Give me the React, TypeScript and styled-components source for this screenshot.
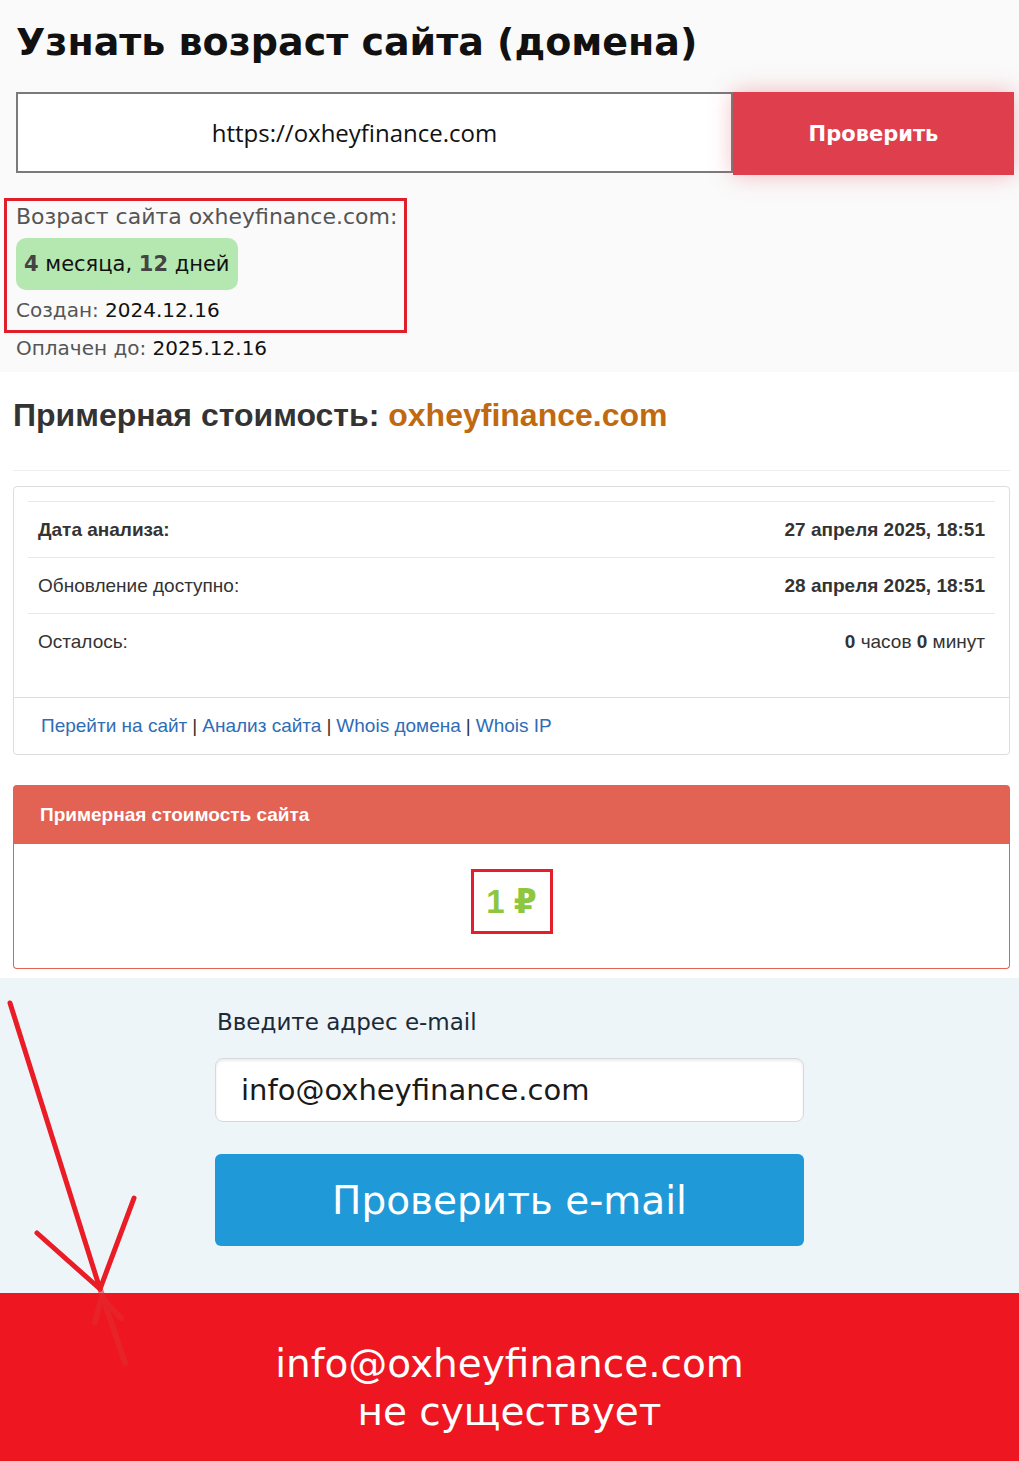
import React from "react";
import styled, { createGlobalStyle } from "styled-components";

const GlobalStyle = createGlobalStyle`
  html, body {
    margin: 0;
    padding: 0;
  }
  body {
    background: #ffffff;
    font-family: "DejaVu Sans", sans-serif;
  }
`;

const Page = styled.div`
  position: relative;
  width: 1019px;
  overflow: hidden;
`;

/* ---------- domain age block ---------- */

const AgeSection = styled.section`
  background: #fafafa;
  padding: 18px 5px 9px 16px;
`;

const Title = styled.h1`
  margin: 0;
  font: 700 38px/48px "DejaVu Sans", sans-serif;
  color: #111111;
`;

const CheckRow = styled.div`
  display: flex;
  align-items: flex-start;
  margin-top: 26px;
`;

const UrlInput = styled.div`
  box-sizing: border-box;
  width: 717px;
  height: 81px;
  border: 2px solid #7a7a7a;
  background: #ffffff;
  display: flex;
  align-items: center;
  justify-content: center;
  padding-right: 40px;
  font: 400 24px "Open Sans", sans-serif;
  color: #111111;
`;

const CheckButton = styled.button`
  width: 281px;
  height: 83px;
  border: none;
  background: #df3e4d;
  color: #ffffff;
  font: 700 21px "DejaVu Sans", sans-serif;
  box-shadow: 0 0 22px rgba(223, 62, 77, 0.35);
  cursor: pointer;
`;

const ResultBox = styled.div`
  width: fit-content;
  margin: 23px 0 0 -12px;
  border: 3px solid #e01f2b;
  padding: 0 7px 4px 9px;
`;

const InfoLine = styled.div<{ $large?: boolean }>`
  font: 400 ${(p) => (p.$large ? 22 : 20)}px/32px "DejaVu Sans", sans-serif;
  color: #555555;
  b {
    font-weight: 400;
    color: #111111;
  }
`;

const PaidLine = styled(InfoLine)`
  line-height: 30px;
`;

const AgeBadge = styled.div`
  display: inline-flex;
  align-items: center;
  height: 52px;
  margin: 5px 0 4px;
  padding: 0 8px;
  border-radius: 10px;
  background: #b4e8b0;
  font: 400 21px "DejaVu Sans", sans-serif;
  color: #111111;
  b {
    color: #444444;
    font-weight: 700;
  }
`;

/* ---------- price block ---------- */

const PriceSection = styled.section`
  background: #ffffff;
  padding: 23px 9px 9px 13px;
  font-family: "Liberation Sans", Arial, sans-serif;
`;

const PriceHeading = styled.h2`
  margin: 0;
  font: 700 32px/40px "Liberation Sans", Arial, sans-serif;
  color: #333333;
  span {
    color: #bf6a10;
  }
`;

const Divider = styled.hr`
  margin: 35px 0 0;
  border: none;
  border-top: 1px solid #eeeeee;
`;

const InfoPanel = styled.div`
  margin-top: 15px;
  border: 1px solid #dddddd;
  border-radius: 4px;
`;

const PanelBody = styled.div`
  padding: 14px 14px 28px;
`;

const InfoRow = styled.div`
  display: flex;
  justify-content: space-between;
  align-items: center;
  height: 55px;
  padding: 0 10px;
  border-top: 1px solid #e8e8e8;
  font-size: 19px;
  color: #333333;
`;

const RowLabel = styled.span<{ $bold?: boolean }>`
  font-weight: ${(p) => (p.$bold ? 700 : 400)};
`;

const RowValue = styled.span`
  b {
    font-weight: 700;
  }
`;

const PanelFooter = styled.div`
  display: flex;
  align-items: center;
  height: 56px;
  padding-left: 27px;
  border-top: 1px solid #dddddd;
  font-size: 19px;
  color: #333333;
`;

const FooterLink = styled.a`
  color: #2f6db5;
  text-decoration: none;
`;

const Sep = styled.span`
  margin: 0 5px;
`;

const CostPanel = styled.div`
  margin-top: 30px;
`;

const CostHeader = styled.div`
  display: flex;
  align-items: center;
  height: 59px;
  padding-left: 27px;
  background: #e26253;
  border-radius: 4px 4px 0 0;
  font: 700 19px "Liberation Sans", Arial, sans-serif;
  color: #ffffff;
`;

const CostBody = styled.div`
  display: flex;
  align-items: center;
  justify-content: center;
  height: 125px;
  box-sizing: border-box;
  border: 1px solid #e26253;
  border-top: none;
  border-radius: 0 0 4px 4px;
  padding-bottom: 10px;
`;

const PriceMark = styled.div`
  box-sizing: border-box;
  width: 82px;
  height: 65px;
  border: 3px solid #e41e2b;
  display: flex;
  align-items: center;
  justify-content: center;
  font: 700 33px "Liberation Sans", "DejaVu Sans", sans-serif;
  color: #8dc63f;
`;

/* ---------- email check ---------- */

const EmailSection = styled.section`
  background: #eef5f9;
  padding: 28px 0 47px;
`;

const EmailColumn = styled.div`
  width: 589px;
  margin: 0 auto;
`;

const EmailLabel = styled.div`
  padding-left: 2px;
  font: 400 23px/32px "DejaVu Sans", sans-serif;
  color: #1b2a38;
`;

const EmailInput = styled.div`
  box-sizing: border-box;
  height: 64px;
  margin-top: 20px;
  padding-left: 25px;
  display: flex;
  align-items: center;
  background: #ffffff;
  border: 1px solid #d6d9db;
  border-radius: 8px;
  box-shadow: inset 0 2px 3px rgba(0, 0, 0, 0.08);
  font: 400 29px "DejaVu Sans", sans-serif;
  color: #1a1a1a;
`;

const EmailButton = styled.button`
  display: block;
  width: 100%;
  height: 92px;
  margin-top: 32px;
  border: none;
  border-radius: 6px;
  background: #1f99d7;
  color: #ffffff;
  font: 400 39px "DejaVu Sans", sans-serif;
  cursor: pointer;
`;

const ResultBanner = styled.section`
  background: #ee1620;
  padding: 47px 0 26px;
  text-align: center;
  color: #ffffff;
  font: 400 39px/48px "DejaVu Sans", sans-serif;
`;

/* ---------- hand drawn arrow over the page ---------- */

const ArrowLayer = styled.svg`
  position: absolute;
  left: 0;
  top: 0;
  pointer-events: none;
`;

const Arrow = () => (
  <ArrowLayer width="1019" height="1461" viewBox="0 0 1019 1461">
    <g stroke="#ea1d27" strokeWidth="5" strokeLinecap="round" fill="none">
      <path d="M10 1003 L100 1289" />
      <path d="M37 1233 L100 1289" />
      <path d="M134 1198 L100 1289" />
    </g>
    <g stroke="#e42a30" strokeWidth="6" strokeLinecap="round" fill="none" opacity="0.6">
      <path d="M101 1292 L125 1363" />
      <path d="M101 1300 L95 1322" />
      <path d="M104 1300 L121 1318" />
    </g>
  </ArrowLayer>
);

const App = () => (
  <Page>
    <GlobalStyle />

    <AgeSection>
      <Title>Узнать возраст сайта (домена)</Title>
      <CheckRow>
        <UrlInput>https://oxheyfinance.com</UrlInput>
        <CheckButton type="button">Проверить</CheckButton>
      </CheckRow>
      <ResultBox>
        <InfoLine $large>Возраст сайта oxheyfinance.com:</InfoLine>
        <AgeBadge>
          <b>4</b>&nbsp;месяца,&nbsp;<b>12</b>&nbsp;дней
        </AgeBadge>
        <InfoLine>
          Создан: <b>2024.12.16</b>
        </InfoLine>
      </ResultBox>
      <PaidLine>
        Оплачен до: <b>2025.12.16</b>
      </PaidLine>
    </AgeSection>

    <PriceSection>
      <PriceHeading>
        Примерная стоимость: <span>oxheyfinance.com</span>
      </PriceHeading>
      <Divider />
      <InfoPanel>
        <PanelBody>
          <InfoRow>
            <RowLabel $bold>Дата анализа:</RowLabel>
            <RowValue>
              <b>27 апреля 2025, 18:51</b>
            </RowValue>
          </InfoRow>
          <InfoRow>
            <RowLabel>Обновление доступно:</RowLabel>
            <RowValue>
              <b>28 апреля 2025, 18:51</b>
            </RowValue>
          </InfoRow>
          <InfoRow>
            <RowLabel>Осталось:</RowLabel>
            <RowValue>
              <b>0</b> часов <b>0</b> минут
            </RowValue>
          </InfoRow>
        </PanelBody>
        <PanelFooter>
          <FooterLink href="#">Перейти на сайт</FooterLink>
          <Sep>|</Sep>
          <FooterLink href="#">Анализ сайта</FooterLink>
          <Sep>|</Sep>
          <FooterLink href="#">Whois домена</FooterLink>
          <Sep>|</Sep>
          <FooterLink href="#">Whois IP</FooterLink>
        </PanelFooter>
      </InfoPanel>

      <CostPanel>
        <CostHeader>Примерная стоимость сайта</CostHeader>
        <CostBody>
          <PriceMark>1 ₽</PriceMark>
        </CostBody>
      </CostPanel>
    </PriceSection>

    <EmailSection>
      <EmailColumn>
        <EmailLabel>Введите адрес e-mail</EmailLabel>
        <EmailInput>info@oxheyfinance.com</EmailInput>
        <EmailButton type="button">Проверить e-mail</EmailButton>
      </EmailColumn>
    </EmailSection>

    <ResultBanner>
      info@oxheyfinance.com
      <br />
      не существует
    </ResultBanner>

    <Arrow />
  </Page>
);

export default App;
